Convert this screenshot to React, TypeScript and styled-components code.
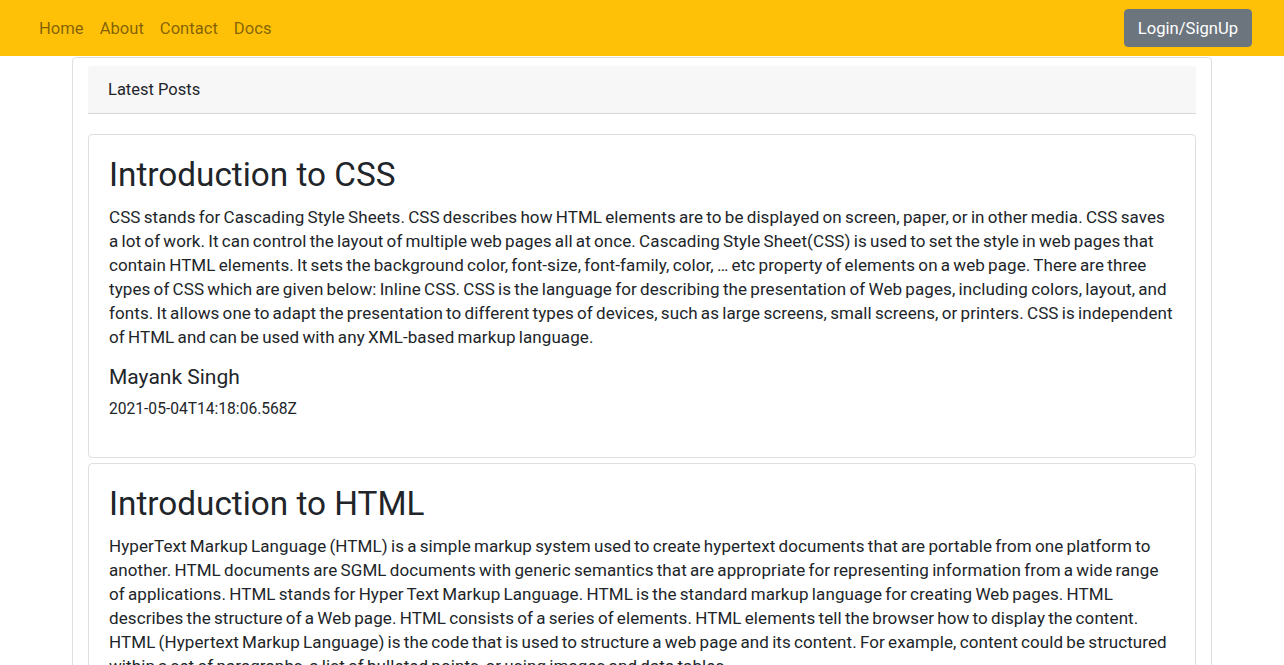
import React from "react";
import styled, { createGlobalStyle } from "styled-components";

const GlobalStyle = createGlobalStyle`
  * { box-sizing: border-box; }
  body {
    margin: 0;
    font-family: Roboto, "Noto Sans", sans-serif;
    font-size: 16.5px;
    line-height: 1.5;
    color: #212529;
    background: #fff;
  }
`;

const Navbar = styled.nav`
  height: 56px;
  background: #ffc107;
  padding: 8px 16px;
  display: flex;
  align-items: center;
`;

const NavInner = styled.div`
  flex: 1;
  padding: 0 16px 0 15px;
  display: flex;
  align-items: center;
  justify-content: space-between;
`;

const NavLinks = styled.ul`
  list-style: none;
  margin: 0;
  padding: 0;
  display: flex;
`;

const NavLink = styled.a`
  display: block;
  padding: 9px 8px 7px;
  font-size: 16.6px;
  line-height: 24px;
  color: rgba(0, 0, 0, 0.5);
  text-decoration: none;
  cursor: pointer;
`;

const Button = styled.button`
  font-family: inherit;
  font-size: 16.6px;
  line-height: 24px;
  padding: 7px 13px 5px;
  border: 1px solid #6c757d;
  border-radius: 4px;
  background: #6c757d;
  color: #fff;
  cursor: pointer;
`;

const Container = styled.main`
  width: 1140px;
  margin: 1px auto 0;
  border: 1px solid rgba(0, 0, 0, 0.125);
  border-radius: 4px;
  padding: 8px 15px 0;
`;

const Header = styled.div`
  background: rgba(0, 0, 0, 0.03);
  border-bottom: 1px solid rgba(0, 0, 0, 0.125);
  border-radius: 3px 3px 0 0;
  padding: 12px 20px 11px;
  line-height: 24px;
`;

const PostList = styled.div`
  margin-top: 20px;
  display: flex;
  flex-direction: column;
  gap: 5px;
`;

const Card = styled.article`
  border: 1px solid rgba(0, 0, 0, 0.125);
  border-radius: 4px;
  padding: 20px;
`;

const Title = styled.h2`
  margin: 0 0 10px;
  font-size: 33.3px;
  font-weight: 400;
  line-height: 40px;
`;

const Body = styled.p`
  margin: 0 0 16px;
  font-size: 17px;
  letter-spacing: 0.095px;
  word-spacing: -1.14px;
  line-height: 24px;
`;

const Author = styled.h5`
  margin: 0 0 8px;
  font-size: 21px;
  font-weight: 400;
  line-height: 24px;
`;

const DateText = styled.p`
  margin: 0 0 16px;
  font-size: 15.6px;
  line-height: 24px;
`;

const posts = [
  {
    title: "Introduction to CSS",
    body:
      "CSS stands for Cascading Style Sheets. CSS describes how HTML elements are to be displayed on screen, paper, or in other media. CSS saves a lot of work. It can control the layout of multiple web pages all at once. Cascading Style Sheet(CSS) is used to set the style in web pages that contain HTML elements. It sets the background color, font-size, font-family, color, … etc property of elements on a web page. There are three types of CSS which are given below: Inline CSS. CSS is the language for describing the presentation of Web pages, including colors, layout, and fonts. It allows one to adapt the presentation to different types of devices, such as large screens, small screens, or printers. CSS is independent of HTML and can be used with any XML-based markup language.",
    author: "Mayank Singh",
    date: "2021-05-04T14:18:06.568Z",
  },
  {
    title: "Introduction to HTML",
    body:
      "HyperText Markup Language (HTML) is a simple markup system used to create hypertext documents that are portable from one platform to another. HTML documents are SGML documents with generic semantics that are appropriate for representing information from a wide range of applications. HTML stands for Hyper Text Markup Language. HTML is the standard markup language for creating Web pages. HTML describes the structure of a Web page. HTML consists of a series of elements. HTML elements tell the browser how to display the content. HTML (Hypertext Markup Language) is the code that is used to structure a web page and its content. For example, content could be structured within a set of paragraphs, a list of bulleted points, or using images and data tables.",
    author: "Mayank Singh",
    date: "2021-05-04T14:20:41.102Z",
  },
];

export default function App() {
  return (
    <>
      <GlobalStyle />
      <Navbar>
        <NavInner>
          <NavLinks>
            {["Home", "About", "Contact", "Docs"].map((l) => (
              <li key={l}>
                <NavLink>{l}</NavLink>
              </li>
            ))}
          </NavLinks>
          <Button>Login/SignUp</Button>
        </NavInner>
      </Navbar>
      <Container>
        <Header>Latest Posts</Header>
        <PostList>
          {posts.map((p) => (
            <Card key={p.title}>
              <Title>{p.title}</Title>
              <Body>{p.body}</Body>
              <Author>{p.author}</Author>
              <DateText>{p.date}</DateText>
            </Card>
          ))}
        </PostList>
      </Container>
    </>
  );
}
